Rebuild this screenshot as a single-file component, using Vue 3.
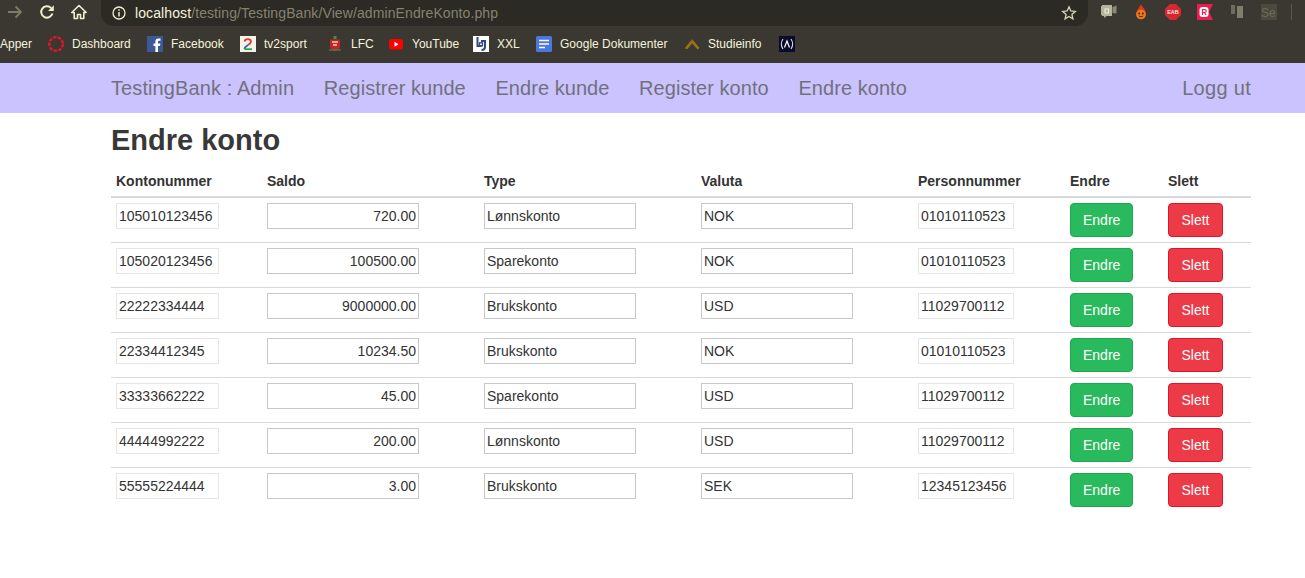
<script setup>
// width = room for one bookmark including its gap
const bookmarks = [
  { label: 'Dashboard', icon: 'dash', width: 99 },
  { label: 'Facebook', icon: 'fb', width: 93 },
  { label: 'tv2sport', icon: 'tv2', width: 87 },
  { label: 'LFC', icon: 'lfc', width: 61 },
  { label: 'YouTube', icon: 'yt', width: 85 },
  { label: 'XXL', icon: 'xxl', width: 63 },
  { label: 'Google Dokumenter', icon: 'docs', width: 148 },
  { label: 'Studieinfo', icon: 'studie', width: 95 },
  { label: '', icon: 'fcc', width: 16 }
]

const navLinks = ['Registrer kunde', 'Endre kunde', 'Register konto', 'Endre konto']

const columns = ['Kontonummer', 'Saldo', 'Type', 'Valuta', 'Personnummer', 'Endre', 'Slett']

const accounts = [
  { konto: '105010123456', saldo: '720.00', type: 'Lønnskonto', valuta: 'NOK', person: '01010110523' },
  { konto: '105020123456', saldo: '100500.00', type: 'Sparekonto', valuta: 'NOK', person: '01010110523' },
  { konto: '22222334444', saldo: '9000000.00', type: 'Brukskonto', valuta: 'USD', person: '11029700112' },
  { konto: '22334412345', saldo: '10234.50', type: 'Brukskonto', valuta: 'NOK', person: '01010110523' },
  { konto: '33333662222', saldo: '45.00', type: 'Sparekonto', valuta: 'USD', person: '11029700112' },
  { konto: '44444992222', saldo: '200.00', type: 'Lønnskonto', valuta: 'USD', person: '11029700112' },
  { konto: '55555224444', saldo: '3.00', type: 'Brukskonto', valuta: 'SEK', person: '12345123456' }
]
</script>

<template>
  <div class="page">
    <header class="chrome">
      <div class="toolbar">
        <svg class="tool back" width="16" height="16" viewBox="0 0 16 16">
          <path d="M1 8h13M8.500 2.500 14 8l-5.500 5.500" fill="none" stroke="#7d7b66" stroke-width="1.900" />
        </svg>
        <svg class="tool reload" width="16" height="16" viewBox="0 0 16 16">
          <path d="M13.400 9.500A5.700 5.700 0 1 1 12 4" fill="none" stroke="#f1efcf" stroke-width="2" />
          <path d="M14.800 1.200v5.800H9z" fill="#f1efcf" />
        </svg>
        <svg class="tool home" width="16" height="16" viewBox="0 0 16 16">
          <path d="M8 1.500 .8 8.500h2.400v6h3.300v-4h3v4h3.300v-6h2.400z" fill="none" stroke="#f1efcf" stroke-width="1.600" stroke-linejoin="round" />
        </svg>
        <div class="omnibox">
          <svg width="14" height="14" viewBox="0 0 14 14">
            <circle cx="7" cy="7" r="6" fill="none" stroke="#f1efcf" stroke-width="1.300" />
            <path d="M7 6v4.500M7 3.200v1.500" stroke="#f1efcf" stroke-width="1.500" />
          </svg>
          <span class="url"><span class="host">localhost</span>/testing/TestingBank/View/adminEndreKonto.php</span>
          <svg class="star" width="16" height="16" viewBox="0 0 16 16">
            <path d="m8 1.800 1.800 4.200 4.500.4-3.400 3 1 4.400L8 11.500l-3.900 2.300 1-4.400-3.400-3 4.500-.4z" fill="none" stroke="#d8d6b8" stroke-width="1.300" />
          </svg>
        </div>
        <div class="extensions">
          <svg width="16" height="16" viewBox="0 0 16 16">
            <path d="M0 2.500 1.500 1h9.500v11H5.500l-2 2-.5-2H1.500L0 10.500z" fill="#b5b49c" />
            <path d="M11.500 3 15.500 1.500v8l-4-.5z" fill="#8a8975" />
            <rect x="4" y="5" width="3.500" height="4" fill="none" stroke="#efeedd" stroke-width="1" />
          </svg>
          <svg width="16" height="16" viewBox="0 0 16 16">
            <path d="M8 0c.5 2.500 5 5 5 10a5 5 0 0 1-10 0C3 7 6.500 3.500 8 0z" fill="#d93a1c" />
            <circle cx="8" cy="10.500" r="4.800" fill="#ec7a1c" />
            <circle cx="6.200" cy="9.500" r=".9" fill="#3a1a08" />
            <circle cx="9.800" cy="9.500" r=".9" fill="#3a1a08" />
            <path d="M5.800 11.800c1.200 1.200 3.200 1.200 4.400 0" fill="none" stroke="#3a1a08" stroke-width=".9" />
          </svg>
          <svg width="16" height="16" viewBox="0 0 16 16">
            <path d="M5 0h6l5 5v6l-5 5H5l-5-5V5z" fill="#d8272d" />
            <rect x=".8" y="5.300" width="14.400" height="5.400" fill="#d8272d" />
            <text x="8" y="10.300" text-anchor="middle" class="eab">EAB</text>
          </svg>
          <svg width="16" height="16" viewBox="0 0 16 16">
            <path d="M0 0h16l-4 8 4 8H0z" fill="#ee1c4e" />
            <rect x="2.500" y="3" width="9" height="10" rx="3" fill="#fff" />
            <path d="M5.500 11V5.500h2.200a1.500 1.500 0 0 1 0 3H5.500M7.500 8.500 9 11" fill="none" stroke="#ee1c4e" stroke-width="1.200" />
          </svg>
          <svg width="16" height="16" viewBox="0 0 16 16">
            <rect x="2" y="1" width="4" height="9" fill="#6e6d5d" />
            <rect x="8" y="2" width="6" height="12" fill="#7f7e6c" />
          </svg>
          <div class="se-icon">Se</div>
        </div>
        <span class="divider"></span>
      </div>

      <nav class="bookmarks">
        <span class="apps">Apper</span>
        <a v-for="b in bookmarks" :key="b.icon" class="bookmark" :style="{ width: b.width + 'px' }">
          <svg v-if="b.icon === 'dash'" width="16" height="16" viewBox="0 0 16 16">
            <circle cx="8" cy="8" r="6.800" fill="none" stroke="#f0102a" stroke-width="2.200" stroke-dasharray="3.500 1.300" />
          </svg>
          <svg v-else-if="b.icon === 'fb'" width="16" height="16" viewBox="0 0 16 16">
            <rect width="16" height="16" fill="#3b5998" />
            <path d="M11 16V10h2l.4-2.500H11V6c0-.8.300-1.200 1.300-1.200h1.200V2.600H11.600C9.400 2.600 8.400 3.800 8.400 5.800v1.700H6.500V10h1.900v6z" fill="#fff" />
          </svg>
          <svg v-else-if="b.icon === 'tv2'" width="16" height="16" viewBox="0 0 16 16">
            <rect width="16" height="16" fill="#f4f4e8" />
            <path d="M4.500 5.500C5 2.500 11 2.300 11 5.500 11 7 9.500 8 8 9" fill="none" stroke="#e33" stroke-width="1.800" />
            <path d="M8 9C6 10.300 4.700 11.500 4.500 13" fill="none" stroke="#2a5fd0" stroke-width="1.800" />
            <path d="M4.500 13.200H12" fill="none" stroke="#2aa845" stroke-width="1.800" />
          </svg>
          <svg v-else-if="b.icon === 'lfc'" width="16" height="16" viewBox="0 0 16 16">
            <path d="M6.500 0h3v3h-3z" fill="#3f8f4e" />
            <path d="M3 3.500h10v7c0 2-2.500 3.500-5 4.500-2.500-1-5-2.500-5-4.500z" fill="#c8202c" />
            <path d="M5 6h6M6 9h4" stroke="#e9d9a0" stroke-width="1.300" />
            <path d="M2 14h12" stroke="#3f8f4e" stroke-width="1.200" />
          </svg>
          <svg v-else-if="b.icon === 'yt'" width="16" height="16" viewBox="0 0 16 16">
            <rect x="1" y="3" width="14" height="10.500" rx="3" fill="#f00" />
            <path d="M6.500 5.800v5l4-2.500z" fill="#fff" />
          </svg>
          <svg v-else-if="b.icon === 'xxl'" width="16" height="16" viewBox="0 0 16 16">
            <rect width="16" height="16" fill="#fff" />
            <path d="M4.500 1v9h4M8 5h4v6c0 2-1.500 3-3.500 3" fill="none" stroke="#2f4a80" stroke-width="2" />
            <rect x="6.500" y="6.800" width="3" height="3" fill="none" stroke="#2f4a80" stroke-width="1.300" />
          </svg>
          <svg v-else-if="b.icon === 'docs'" width="16" height="16" viewBox="0 0 16 16">
            <rect width="16" height="16" rx="1.500" fill="#4a78dc" />
            <path d="M3 4.500h10M3 8h10M3 11.500h6" stroke="#fff" stroke-width="1.700" />
          </svg>
          <svg v-else-if="b.icon === 'studie'" width="16" height="16" viewBox="0 0 16 16">
            <path d="M.5 12.500 7 4.500l1.800 2L3.500 13zM8 3l7.500 9-2 1.500L7 6z" fill="#9b7412" />
          </svg>
          <svg v-else width="16" height="16" viewBox="0 0 16 16">
            <rect width="16" height="16" fill="#0a0a2a" />
            <path d="M4 3C2 6 2 10 4 13M12 3c2 3 2 7 0 10" fill="none" stroke="#d8d8e8" stroke-width="1.100" />
            <path d="M5.500 11.500 8 5l2.500 6.500" fill="none" stroke="#fff" stroke-width="1.200" />
          </svg>
          <span v-if="b.label">{{ b.label }}</span>
        </a>
      </nav>
    </header>

    <nav class="navbar">
      <div class="nav-left">
        <a class="nav-link brand">TestingBank : Admin</a>
        <a v-for="link in navLinks" :key="link" class="nav-link">{{ link }}</a>
      </div>
      <a class="nav-link logout">Logg ut</a>
    </nav>

    <main class="content">
      <h1>Endre konto</h1>
      <table class="accounts">
        <colgroup>
          <col class="c-konto" />
          <col class="c-wide" />
          <col class="c-wide" />
          <col class="c-wide" />
          <col class="c-person" />
          <col class="c-endre" />
          <col class="c-slett" />
        </colgroup>
        <thead>
          <tr>
            <th v-for="col in columns" :key="col">{{ col }}</th>
          </tr>
        </thead>
        <tbody>
          <tr v-for="acc in accounts" :key="acc.konto">
            <td><input class="field light konto" :value="acc.konto" readonly /></td>
            <td><input class="field wide right" :value="acc.saldo" /></td>
            <td><input class="field wide" :value="acc.type" /></td>
            <td><input class="field wide" :value="acc.valuta" /></td>
            <td><input class="field light person" :value="acc.person" readonly /></td>
            <td><button class="btn green">Endre</button></td>
            <td><button class="btn red">Slett</button></td>
          </tr>
        </tbody>
      </table>
    </main>
  </div>
</template>

<style>
html,
body {
  margin: 0;
  background: #fff;
}
</style>

<style scoped>
.page {
  height: 578px;
  overflow: hidden;
  font-family: "Liberation Sans", Arial, sans-serif;
  color: #333;
}

.chrome {
  height: 63px;
  background: #3b3832;
}

.toolbar {
  display: flex;
  align-items: flex-start;
  height: 28px;
}

.tool {
  margin-top: 4px;
  flex: none;
}

.back {
  margin-left: 7px;
}

.reload {
  margin-left: 16px;
}

.home {
  margin-left: 16px;
}

.omnibox {
  display: flex;
  align-items: center;
  width: 987px;
  height: 26px;
  margin-left: 14px;
  padding: 0 11px;
  box-sizing: border-box;
  background: #2b2a25;
  border-radius: 0 0 13px 13px;
}

.url {
  margin-left: 9px;
  font-size: 14px;
  letter-spacing: .1px;
  color: #85836e;
  white-space: nowrap;
}

.host {
  color: #f6f4dc;
}

.star {
  margin-left: auto;
}

.extensions {
  display: flex;
  gap: 16px;
  margin: 4px 0 0 13px;
}

.eab {
  font-size: 5.500px;
  font-weight: 700;
  fill: #f7e4e4;
}

.se-icon {
  width: 16px;
  height: 16px;
  padding-top: 2px;
  box-sizing: border-box;
  background: #4c4a3f;
  color: #6c6a59;
  font-size: 12px;
  line-height: 14px;
}

.divider {
  width: 1px;
  height: 16px;
  margin: 4px 0 0 14px;
  background: #5a5849;
}

.bookmarks {
  display: flex;
  align-items: center;
  height: 32px;
  font-size: 12px;
  color: #f6f4dc;
}

.apps {
  margin-right: 16px;
}

.bookmark {
  display: flex;
  align-items: center;
  gap: 8px;
  flex: none;
  white-space: nowrap;
}

.navbar {
  display: flex;
  justify-content: space-between;
  height: 50px;
  align-items: center;
  padding: 0 54px 0 111px;
  background: #cac3fe;
}

.nav-left {
  display: flex;
  gap: 29.700px;
}

.nav-link {
  font-size: 20px;
  letter-spacing: .05px;
  color: #72707c;
  white-space: nowrap;
}

.brand {
  letter-spacing: .1px;
}

.logout {
  letter-spacing: .3px;
}

.content {
  padding: 0 54px 0 111px;
}

h1 {
  margin: 0;
  padding-top: 9px;
  font-size: 29px;
  line-height: 36px;
  font-weight: 700;
  color: #383838;
}

.accounts {
  width: 1140px;
  margin-top: 10px;
  table-layout: fixed;
  border-collapse: separate;
  border-spacing: 0;
}

.c-konto {
  width: 151px;
}

.c-wide {
  width: 217px;
}

.c-person {
  width: 152px;
}

.c-endre {
  width: 98px;
}

.c-slett {
  width: 88px;
}

th {
  height: 30px;
  padding: 0 5px 2px;
  box-sizing: border-box;
  border-bottom: 2px solid #d9d9d9;
  font-size: 14px;
  font-weight: 700;
  text-align: left;
  color: #333;
}

td {
  height: 45px;
  padding: 5px 5px 0;
  box-sizing: border-box;
  border-bottom: 1px solid #d9d9d9;
  vertical-align: top;
}

tbody tr:last-child td {
  border-bottom: none;
}

.field {
  display: block;
  height: 26px;
  padding: 1px 2px;
  box-sizing: border-box;
  border: 1px solid #c8c8c8;
  border-radius: 0;
  outline: none;
  background: #fff;
  font-family: "Liberation Sans", Arial, sans-serif;
  font-size: 14px;
  color: #333;
}

.light {
  border-color: #e6e6e6;
}

.konto {
  width: 103px;
}

.person {
  width: 96px;
}

.wide {
  width: 152px;
}

.right {
  text-align: right;
}

.btn {
  display: block;
  height: 34px;
  padding: 0 12px;
  border: 1px solid;
  border-radius: 4px;
  font-family: "Liberation Sans", Arial, sans-serif;
  font-size: 14px;
  color: #fff;
}

.green {
  width: 63px;
  background: #28ba5c;
  border-color: #1fa84f;
}

.red {
  width: 55px;
  background: #ec3a47;
  border-color: #e2142d;
}
</style>
